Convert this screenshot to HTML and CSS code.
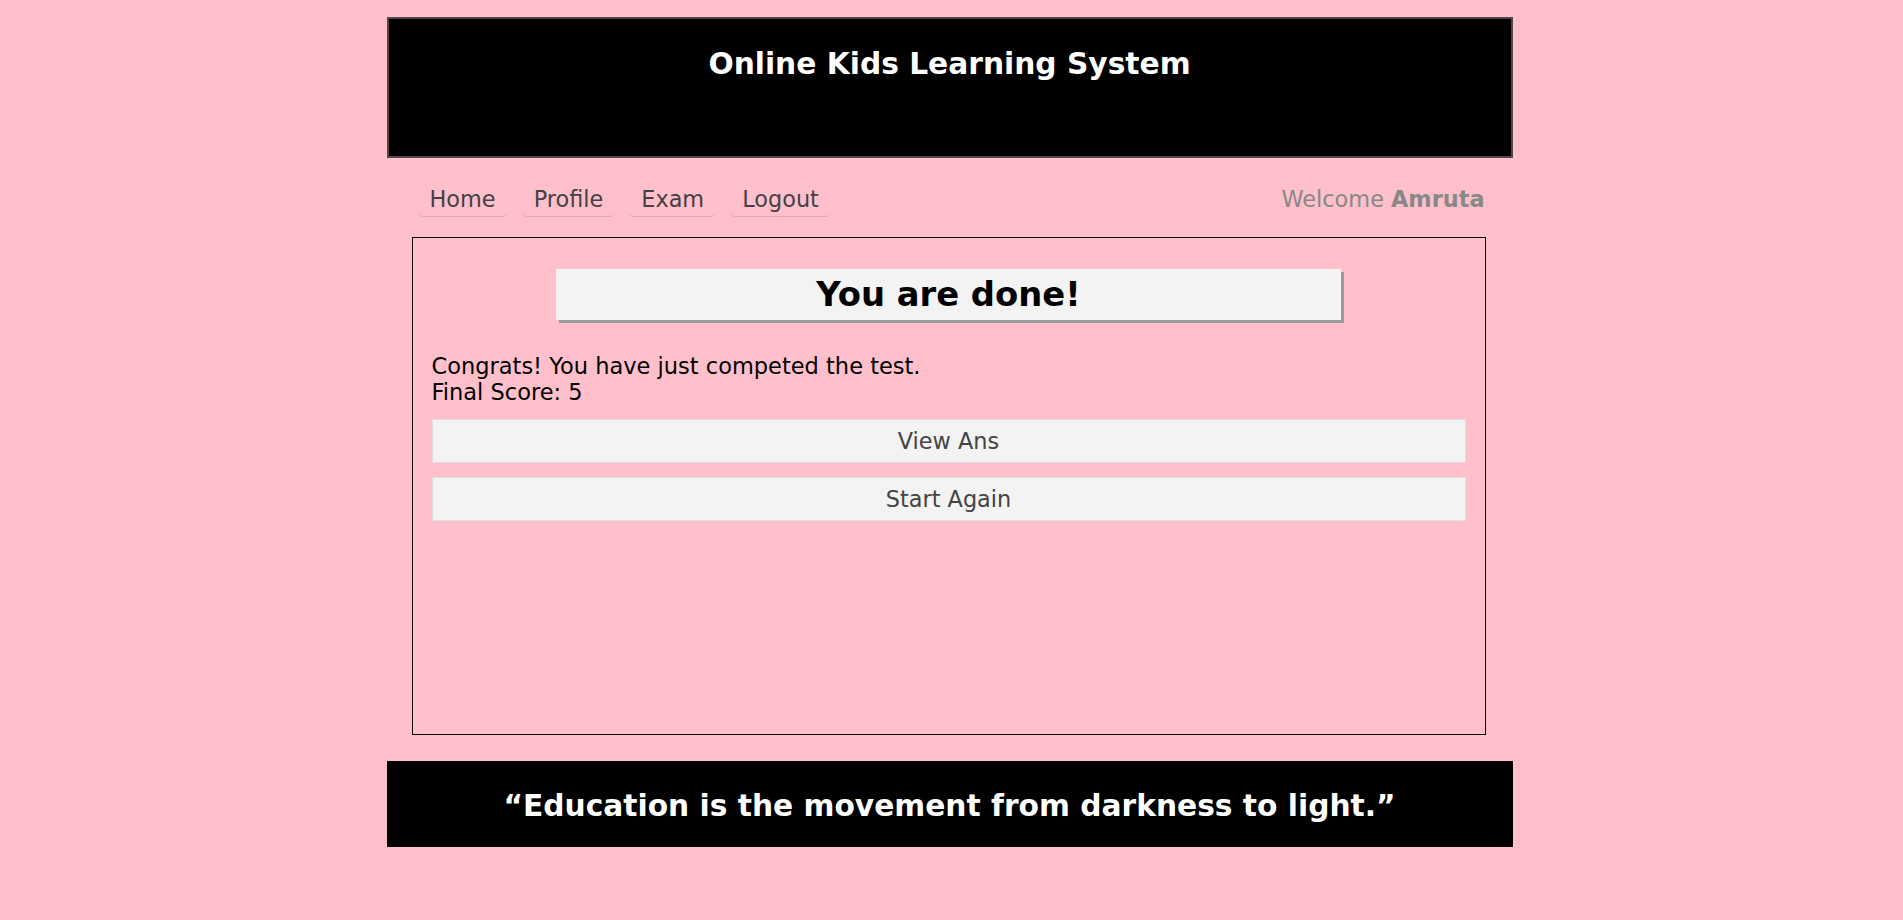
FILE: index.html
```html
<!DOCTYPE html>
<html lang="en">
<head>
<meta charset="utf-8">
<title>Online Kids Learning System</title>
<link rel="stylesheet" href="styles.css">
</head>
<body>
<div class="page">
  <header class="site-header">
    <h1 class="site-title">Online Kids Learning System</h1>
  </header>
  <nav class="nav">
    <ul class="nav-list">
      <li class="nav-item">Home</li>
      <li class="nav-item">Profile</li>
      <li class="nav-item">Exam</li>
      <li class="nav-item">Logout</li>
    </ul>
    <div class="welcome">Welcome <b>Amruta</b></div>
  </nav>
  <main class="content">
    <h2 class="done-title">You are done!</h2>
    <p class="result">Congrats! You have just competed the test.<br>Final Score: 5</p>
    <button class="action-btn" type="button">View Ans</button>
    <button class="action-btn" type="button">Start Again</button>
  </main>
  <footer class="site-footer">
    <p class="quote">“Education is the movement from darkness to light.”</p>
  </footer>
</div>
</body>
</html>
```
FILE: styles.css
```css
html, body {
  margin: 0;
  padding: 0;
}
body {
  background: #ffc0cb;
  font-family: "DejaVu Sans", Verdana, sans-serif;
  color: #000;
}
.page {
  width: 1126px;
  margin: 17px 0 0 calc(50% - 565px);
}
.site-header {
  box-sizing: border-box;
  height: 141px;
  background: #000;
  border: 2px solid #51464c;
  padding-top: 27px;
}
.site-title {
  margin: 0;
  color: #fff;
  font-size: 29.7px;
  font-weight: bold;
  text-align: center;
  line-height: normal;
}
.nav {
  display: flex;
  align-items: baseline;
  justify-content: space-between;
  margin: 24px 0 0 31px;
  width: 1067px;
}
.nav-list {
  display: flex;
  gap: 14px;
  list-style: none;
  margin: 0;
  padding: 0;
}
.nav-item {
  font-size: 22.4px;
  color: #454045;
  padding: 4px 12px;
  border-bottom: 1px solid rgba(120, 100, 110, 0.25);
  border-radius: 5px;
}
.welcome {
  font-size: 22.4px;
  color: #888;
}
.welcome b {
  font-weight: bold;
}
.content {
  box-sizing: border-box;
  width: 1074px;
  height: 498px;
  margin: 20px 0 0 25px;
  border: 1px solid #000;
  padding: 19px;
}
.done-title {
  width: 76%;
  height: 51px;
  margin: 12px auto 0;
  background: #f3f3f3;
  box-shadow: 3px 3px 0 #9a9a9a;
  font-size: 33.8px;
  font-weight: bold;
  line-height: 51px;
  text-align: center;
  color: #000;
}
.result {
  margin: 33px 0 0;
  font-size: 22.5px;
  line-height: normal;
  color: #000;
}
.action-btn {
  display: block;
  box-sizing: border-box;
  width: 100%;
  height: 44px;
  margin-top: 14px;
  background: #f3f3f3;
  border: 1px solid #e2dcdd;
  font-family: inherit;
  font-size: 22.4px;
  color: #444;
  text-align: center;
  padding: 0;
}
.site-footer {
  box-sizing: border-box;
  height: 86px;
  margin-top: 26px;
  background: #000;
  padding-top: 27px;
}
.quote {
  margin: 0;
  color: #fff;
  font-size: 29.7px;
  font-weight: bold;
  text-align: center;
  line-height: normal;
}
```
